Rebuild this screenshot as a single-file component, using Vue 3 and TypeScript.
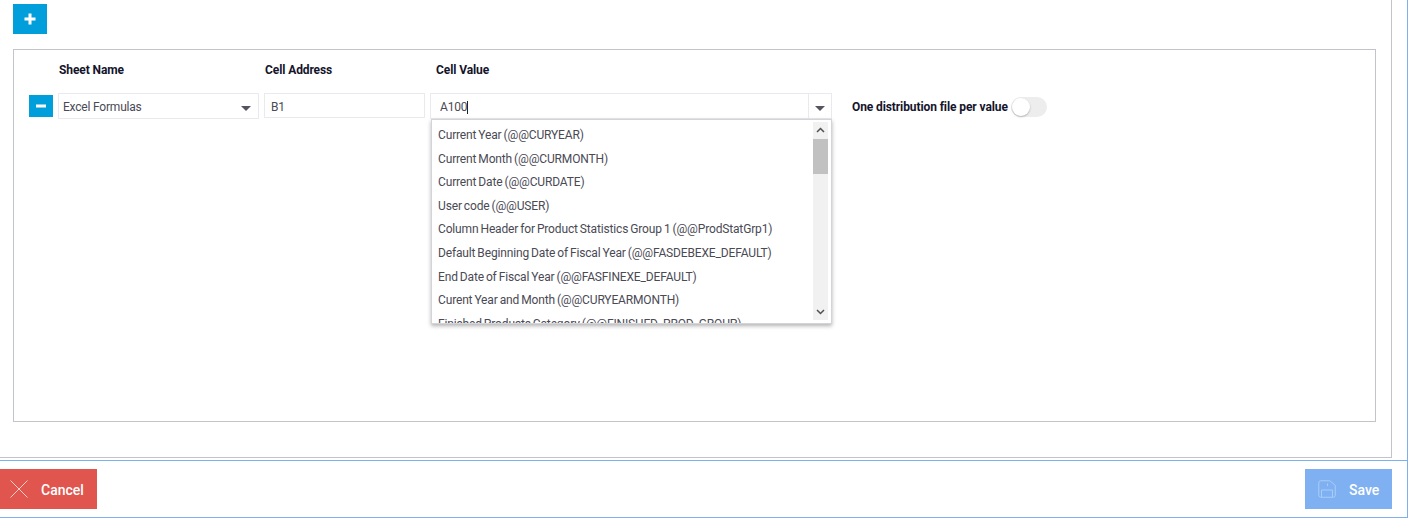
<script setup lang="ts">
const options: string[] = [
  'Current Year (@@CURYEAR)',
  'Current Month (@@CURMONTH)',
  'Current Date (@@CURDATE)',
  'User code (@@USER)',
  'Column Header for Product Statistics Group 1 (@@ProdStatGrp1)',
  'Default Beginning Date of Fiscal Year (@@FASDEBEXE_DEFAULT)',
  'End Date of Fiscal Year (@@FASFINEXE_DEFAULT)',
  'Curent Year and Month (@@CURYEARMONTH)',
  'Finished Products Category (@@FINISHED_PROD_GROUP)',
]
</script>

<template>
  <div class="page">
    <div class="main">
      <button class="btn add" type="button" aria-label="Add">
        <svg width="12" height="12" viewBox="0 0 12 12"><path d="M4.500 0.500h3v4h4v3h-4v4h-3v-4h-4v-3h4z" fill="#fff" /></svg>
      </button>
      <div class="panel">
        <div class="heads">
          <span class="h-sheet">Sheet Name</span>
          <span class="h-addr">Cell Address</span>
          <span class="h-value">Cell Value</span>
        </div>
        <div class="row">
          <button class="btn remove" type="button" aria-label="Remove">
            <svg width="10" height="4" viewBox="0 0 10 4"><rect width="10" height="3" y="0.500" fill="#fff" /></svg>
          </button>
          <div class="field sheet">
            <span>Excel Formulas</span>
            <i class="caret"></i>
          </div>
          <div class="field addr"><span>B1</span></div>
          <div class="combo">
            <div class="combo-input">
              <span class="typed">A100</span>
              <span class="combo-arrow"><i class="caret"></i></span>
            </div>
            <div class="menu">
              <ul class="list">
                <li v-for="o in options" :key="o">{{ o }}</li>
              </ul>
              <div class="scroll">
                <svg class="sb-arrow" width="9" height="6" viewBox="0 0 9 6"><path d="M1 5l3.500-3.500L8 5" fill="none" stroke="#505050" stroke-width="1.500" /></svg>
                <div class="track"><div class="thumb"></div></div>
                <svg class="sb-arrow" width="9" height="6" viewBox="0 0 9 6"><path d="M1 1l3.500 3.500L8 1" fill="none" stroke="#505050" stroke-width="1.500" /></svg>
              </div>
            </div>
          </div>
          <span class="toggle-label">One distribution file per value</span>
          <span class="toggle"><span class="knob"></span></span>
        </div>
      </div>
    </div>
    <div class="footer">
      <button class="act cancel" type="button">
        <svg width="18" height="18" viewBox="0 0 18 18"><path d="M0.500 0.500l17 17M17.500 0.500l-17 17" stroke="#fff" stroke-width="0.700" fill="none" /></svg>
        <span>Cancel</span>
      </button>
      <button class="act save" type="button">
        <svg width="18" height="18" viewBox="0 0 18 18"><path d="M2.750 0.750h9l5.500 4.500v10a2 2 0 0 1-2 2H2.750a2 2 0 0 1-2-2V2.750a2 2 0 0 1 2-2zM3.500 17v-7h11v7M9.500 3.500v2.500" fill="none" stroke="#a9cdf7" stroke-width="1" /></svg>
        <span>Save</span>
      </button>
    </div>
  </div>
</template>

<style scoped>
.page {
  width: 1408px;
  height: 518px;
  box-sizing: border-box;
  border-right: 1px solid #7fb0ee;
  border-bottom: 1px solid #7fb0ee;
  font-family: Roboto, "Liberation Sans", sans-serif;
  font-size: 12px;
  color: #4a4a55;
  background: #fff;
  overflow: hidden;
}
.main {
  width: 1392px;
  height: 458px;
  box-sizing: border-box;
  border-right: 1px solid #c3c3cc;
  border-bottom: 1px solid #c3c3cc;
  padding: 4px 0 0 13px;
}
.btn {
  display: flex;
  align-items: center;
  justify-content: center;
  border: 0;
  padding: 0;
  background: #009fdb;
}
.add { width: 34px; height: 30px; }
.panel {
  width: 1363px;
  height: 373px;
  box-sizing: border-box;
  margin-top: 15px;
  border: 1px solid #c3c3cc;
}
.heads {
  display: flex;
  height: 43px;
  padding: 13px 0 0 45px;
  box-sizing: border-box;
  font-weight: 700;
  color: #14142b;
  line-height: 14px;
  letter-spacing: -0.1px;
}
.h-sheet { width: 206px; }
.h-addr { width: 171px; }
.row {
  display: flex;
  align-items: flex-start;
  padding-left: 15px;
}
.remove { width: 24px; height: 22px; margin: 2px 5px 0 0; }
.field {
  display: flex;
  align-items: center;
  justify-content: space-between;
  box-sizing: border-box;
  height: 26px;
  border: 1px solid #e9e9ee;
  padding: 2px 4px 0;
  letter-spacing: -0.2px;
}
.sheet { width: 201px; margin-right: 5px; padding-right: 7px; }
.addr { width: 161px; height: 25px; margin-right: 5px; padding-left: 6px; }
.caret {
  display: block;
  width: 0;
  height: 0;
  margin-top: 3px;
  border-left: 5px solid transparent;
  border-right: 5px solid transparent;
  border-top: 5px solid #55555f;
}
.combo { position: relative; width: 402px; margin-right: 20px; }
.combo-input {
  display: flex;
  align-items: center;
  justify-content: space-between;
  box-sizing: border-box;
  height: 26px;
  border: 1px solid #e9e9ee;
}
.typed {
  margin-top: 2px;
  padding-left: 9px;
  border-right: 1px solid #222;
  line-height: 13px;
  letter-spacing: -0.2px;
}
.combo-arrow {
  display: flex;
  align-items: center;
  justify-content: center;
  width: 22px;
  height: 24px;
  border-left: 1px solid #e9e9ee;
}
.combo-arrow .caret { margin-top: 5px; }
.menu {
  position: absolute;
  top: 26px;
  left: 1px;
  width: 401px;
  height: 205px;
  box-sizing: border-box;
  display: flex;
  justify-content: space-between;
  background: #fff;
  border: 1px solid #d4d4d8;
  box-shadow: 0 2px 4px rgba(0, 0, 0, 0.3);
  overflow: hidden;
}
.list {
  list-style: none;
  margin: 0;
  padding: 3px 0 0 6px;
  line-height: 23.600px;
  white-space: nowrap;
  letter-spacing: -0.15px;
  word-spacing: -0.8px;
}
.list li { padding-top: 1px; margin-bottom: -1px; }
.scroll {
  width: 15px;
  margin: 2px 3px 3px 0;
  background: #f1f1f1;
  display: flex;
  flex-direction: column;
  align-items: center;
}
.sb-arrow { flex: none; margin: 5px 0; }
.track { flex: 1; width: 100%; }
.thumb { width: 100%; height: 35px; background: #c1c1c1; margin-top: 1px; }
.toggle-label {
  margin-top: 7px;
  font-weight: 700;
  color: #14142b;
  line-height: 14px;
  letter-spacing: -0.1px;
  width: 159px;
  white-space: nowrap;
}
.toggle {
  display: block;
  position: relative;
  width: 36px;
  height: 20px;
  margin-top: 4px;
  border-radius: 10px;
  background: #ededed;
}
.knob {
  position: absolute;
  left: 1px;
  top: 1px;
  width: 18px;
  height: 18px;
  border-radius: 50%;
  background: #fff;
  box-shadow: 0 1px 2px rgba(0, 0, 0, 0.25);
}
.footer {
  display: flex;
  align-items: center;
  justify-content: space-between;
  height: 59px;
  box-sizing: border-box;
  margin-top: 2px;
  border-top: 1px solid #7fb0ee;
  padding: 0 15px 2px 0;
}
.act {
  display: flex;
  align-items: center;
  height: 40px;
  border: 0;
  padding: 0;
  color: #fff;
  font-family: inherit;
  font-size: 14px;
  font-weight: 500;
}
.act span { padding-top: 2px; }
.cancel { width: 97px; background: #e0554e; padding-left: 10px; gap: 13px; }
.save { width: 87px; background: #7fb0f1; padding-left: 13px; gap: 13px; }
</style>
